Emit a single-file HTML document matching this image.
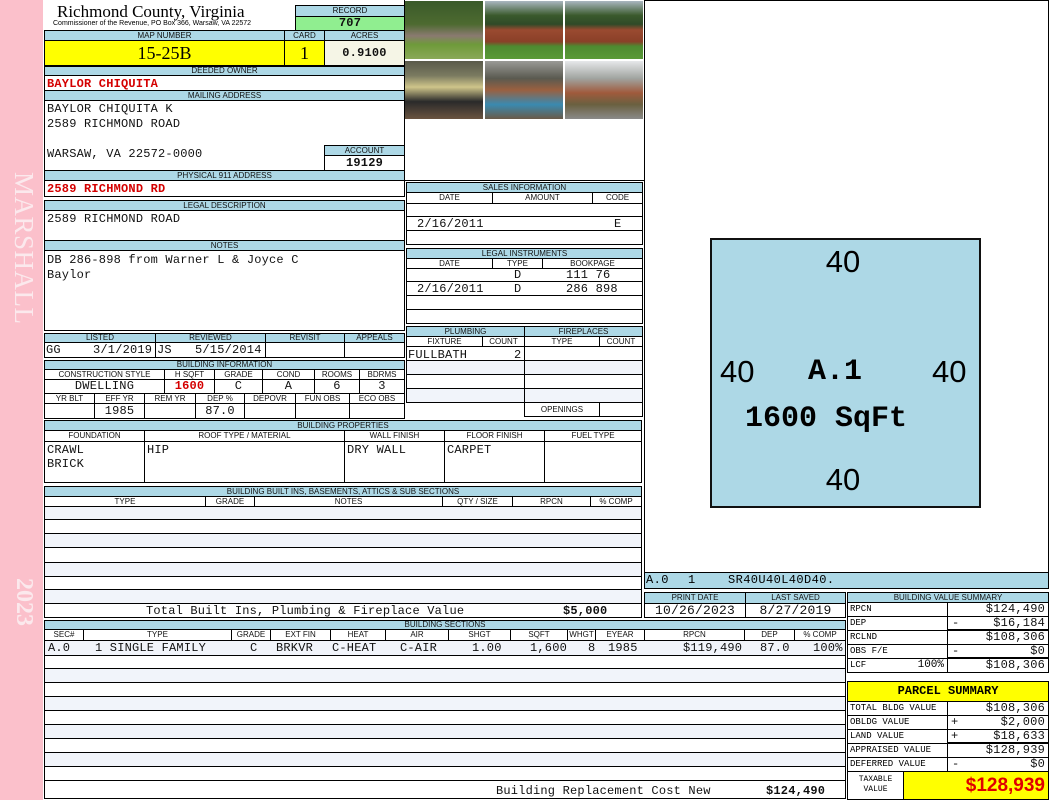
<!DOCTYPE html>
<html><head><meta charset="utf-8"><style>
*{margin:0;padding:0;box-sizing:border-box}
body{width:1050px;height:800px;position:relative;background:#fff;overflow:hidden;font-family:"Liberation Sans",sans-serif}
div,span.a{position:absolute}
.c{border:1px solid #000;background:#fff;overflow:hidden;white-space:nowrap}
.h{border:1px solid #000;background:#add8e6;font:8px/9px "Liberation Sans",sans-serif;text-align:center;color:#111;overflow:hidden;white-space:nowrap}
.v{font:12px/13px "Liberation Mono",monospace;letter-spacing:0.2px;color:#111;padding-left:2px}
.vc{text-align:center;padding-left:0}
.vr{text-align:right;padding-right:3px}
.red{color:#d40000;font-weight:bold}
.alt{background:#f1f4fa}
.s{font:9px/12px "Liberation Mono",monospace;padding-left:2px}
span.a{top:0}
</style></head><body>
<div style="left:0;top:0;width:43px;height:800px;background:#fbc0cb"></div>
<div style="left:6px;top:172px;width:36px;height:170px;writing-mode:vertical-rl;font:27px/36px 'Liberation Serif',serif;color:#fbe9ed;letter-spacing:0.5px">MARSHALL</div>
<div style="left:6px;top:578px;width:36px;height:60px;writing-mode:vertical-rl;font:bold 24px/36px 'Liberation Serif',serif;color:#fbe9ed">2023</div>

<div style="left:57px;top:2px;font:17px/19px 'Liberation Serif',serif">Richmond County, Virginia</div>
<div style="left:53px;top:19px;font:7px/9px 'Liberation Sans',sans-serif">Commissioner of the Revenue, PO Box 366, Warsaw, VA 22572</div>
<div class="h" style="left:295px;top:5px;width:110px;height:12px;line-height:10px">RECORD</div>
<div class="c v vc" style="left:295px;top:16px;width:110px;height:15px;background:#90ee90;font-weight:bold">707</div>

<div class="h" style="left:44px;top:30px;width:241px;height:11px">MAP NUMBER</div>
<div class="h" style="left:284px;top:30px;width:41px;height:11px">CARD</div>
<div class="h" style="left:324px;top:30px;width:81px;height:11px">ACRES</div>
<div class="c" style="left:44px;top:40px;width:241px;height:26px;background:#ffff00;font:18px/24px 'Liberation Serif',serif;text-align:center">15-25B</div>
<div class="c" style="left:284px;top:40px;width:41px;height:26px;background:#ffff00;font:18px/24px 'Liberation Serif',serif;text-align:center">1</div>
<div class="c v vc" style="left:324px;top:40px;width:81px;height:26px;background:#f5f5e6;font-weight:bold;line-height:24px">0.9100</div>

<div class="h" style="left:44px;top:66px;width:361px;height:10px;line-height:8px">DEEDED OWNER</div>
<div class="c v red" style="left:44px;top:75px;width:361px;height:16px;line-height:16px">BAYLOR CHIQUITA</div>
<div class="h" style="left:44px;top:90px;width:361px;height:11px">MAILING ADDRESS</div>
<div class="c v" style="left:44px;top:100px;width:361px;height:71px;line-height:15px;white-space:pre;padding-top:1px">BAYLOR CHIQUITA K
2589 RICHMOND ROAD

WARSAW, VA 22572-0000</div>
<div class="h" style="left:324px;top:145px;width:81px;height:11px">ACCOUNT</div>
<div class="c v vc" style="left:324px;top:155px;width:81px;height:16px;font-weight:bold;line-height:15px">19129</div>
<div class="h" style="left:44px;top:170px;width:361px;height:11px">PHYSICAL 911 ADDRESS</div>
<div class="c v red" style="left:44px;top:180px;width:361px;height:17px;line-height:16px">2589 RICHMOND RD</div>

<div class="h" style="left:44px;top:200px;width:361px;height:11px">LEGAL DESCRIPTION</div>
<div class="c v" style="left:44px;top:210px;width:361px;height:31px;padding-top:2px">2589 RICHMOND ROAD</div>
<div class="h" style="left:44px;top:240px;width:361px;height:11px">NOTES</div>
<div class="c v" style="left:44px;top:250px;width:361px;height:81px;line-height:15px;white-space:pre;padding-top:2px">DB 286-898 from Warner L &amp; Joyce C
Baylor</div>

<div class="h" style="left:44px;top:333px;width:112px;height:10px;line-height:8px">LISTED</div>
<div class="h" style="left:155px;top:333px;width:111px;height:10px;line-height:8px">REVIEWED</div>
<div class="h" style="left:265px;top:333px;width:80px;height:10px;line-height:8px">REVISIT</div>
<div class="h" style="left:344px;top:333px;width:61px;height:10px;line-height:8px">APPEALS</div>
<div class="c v" style="left:44px;top:342px;width:112px;height:16px;line-height:15px"><span class="a" style="left:1px">GG</span><span class="a" style="left:48px">3/1/2019</span></div>
<div class="c v" style="left:155px;top:342px;width:111px;height:16px;line-height:15px"><span class="a" style="left:1px">JS</span><span class="a" style="left:39px">5/15/2014</span></div>
<div class="c" style="left:265px;top:342px;width:80px;height:16px"></div>
<div class="c" style="left:344px;top:342px;width:61px;height:16px"></div>

<div class="h" style="left:44px;top:360px;width:361px;height:10px;line-height:8px">BUILDING INFORMATION</div>
<div class="h" style="left:44px;top:369px;width:121px;height:11px;background:#fff">CONSTRUCTION STYLE</div>
<div class="h" style="left:164px;top:369px;width:51px;height:11px;background:#fff">H SQFT</div>
<div class="h" style="left:214px;top:369px;width:49px;height:11px;background:#fff">GRADE</div>
<div class="h" style="left:262px;top:369px;width:53px;height:11px;background:#fff">COND</div>
<div class="h" style="left:314px;top:369px;width:46px;height:11px;background:#fff">ROOMS</div>
<div class="h" style="left:359px;top:369px;width:46px;height:11px;background:#fff">BDRMS</div>
<div class="c v vc" style="left:44px;top:379px;width:121px;height:15px">DWELLING</div>
<div class="c v vc red" style="left:164px;top:379px;width:51px;height:15px">1600</div>
<div class="c v vc" style="left:214px;top:379px;width:49px;height:15px">C</div>
<div class="c v vc" style="left:262px;top:379px;width:53px;height:15px">A</div>
<div class="c v vc" style="left:314px;top:379px;width:46px;height:15px">6</div>
<div class="c v vc" style="left:359px;top:379px;width:46px;height:15px">3</div>
<div class="h" style="left:44px;top:393px;width:51px;height:11px;background:#fff">YR BLT</div>
<div class="h" style="left:94px;top:393px;width:51px;height:11px;background:#fff">EFF YR</div>
<div class="h" style="left:144px;top:393px;width:52px;height:11px;background:#fff">REM YR</div>
<div class="h" style="left:195px;top:393px;width:50px;height:11px;background:#fff">DEP %</div>
<div class="h" style="left:244px;top:393px;width:52px;height:11px;background:#fff">DEPOVR</div>
<div class="h" style="left:295px;top:393px;width:55px;height:11px;background:#fff">FUN OBS</div>
<div class="h" style="left:349px;top:393px;width:56px;height:11px;background:#fff">ECO OBS</div>
<div class="c" style="left:44px;top:403px;width:51px;height:16px"></div>
<div class="c v vc" style="left:94px;top:403px;width:51px;height:16px;line-height:15px">1985</div>
<div class="c" style="left:144px;top:403px;width:52px;height:16px"></div>
<div class="c v vc" style="left:195px;top:403px;width:50px;height:16px;line-height:15px">87.0</div>
<div class="c" style="left:244px;top:403px;width:52px;height:16px"></div>
<div class="c" style="left:295px;top:403px;width:55px;height:16px"></div>
<div class="c" style="left:349px;top:403px;width:56px;height:16px"></div>

<!-- photos -->
<div style="left:404px;top:0;width:241px;height:181px;border:1px solid #000;border-top:none"></div>
<div style="left:405px;top:1px;width:78px;height:58px;background:linear-gradient(#3a5a2a 0,#4d6a30 40%,#8a7a70 60%,#6e9a3a 75%,#8aa858 100%)"></div>
<div style="left:485px;top:1px;width:78px;height:58px;background:linear-gradient(#aab6c0 0,#3a5a2c 25%,#2f4a28 40%,#9a4a30 50%,#8a4028 70%,#4e8a30 78%,#5a9a38 100%)"></div>
<div style="left:565px;top:1px;width:78px;height:58px;background:linear-gradient(#aab6c0 0,#3a5a2c 25%,#2f4a28 40%,#9a4a30 50%,#8a4028 70%,#4e8a30 78%,#5a9a38 100%)"></div>
<div style="left:405px;top:61px;width:78px;height:58px;background:linear-gradient(#5a5a4a 0,#7a7a60 25%,#cfc58a 45%,#2a2a2a 70%,#6a5440 100%)"></div>
<div style="left:485px;top:61px;width:78px;height:58px;background:linear-gradient(#9a9a96 0,#5a5a50 30%,#9a6040 50%,#3a8ab0 75%,#6a5a48 100%)"></div>
<div style="left:565px;top:61px;width:78px;height:58px;background:linear-gradient(#e6e8ea 0,#a0a4a0 30%,#a05a3c 55%,#6a6040 75%,#8a8a88 100%)"></div>

<!-- sales -->
<div class="h" style="left:406px;top:182px;width:237px;height:11px">SALES INFORMATION</div>
<div class="h" style="left:406px;top:192px;width:87px;height:12px;background:#fff">DATE</div>
<div class="h" style="left:492px;top:192px;width:101px;height:12px;background:#fff">AMOUNT</div>
<div class="h" style="left:592px;top:192px;width:51px;height:12px;background:#fff">CODE</div>
<div class="c" style="left:406px;top:203px;width:237px;height:14px"></div>
<div class="c v" style="left:406px;top:216px;width:237px;height:15px;line-height:15px"><span class="a" style="left:10px">2/16/2011</span><span class="a" style="left:207px">E</span></div>
<div class="c" style="left:406px;top:230px;width:237px;height:15px"></div>
<div class="h" style="left:406px;top:248px;width:237px;height:11px">LEGAL INSTRUMENTS</div>
<div class="h" style="left:406px;top:258px;width:87px;height:11px;background:#fff">DATE</div>
<div class="h" style="left:492px;top:258px;width:51px;height:11px;background:#fff">TYPE</div>
<div class="h" style="left:542px;top:258px;width:101px;height:11px;background:#fff">BOOKPAGE</div>
<div class="c v" style="left:406px;top:268px;width:237px;height:14px"><span class="a" style="left:107px">D</span><span class="a" style="left:159px">111 76</span></div>
<div class="c v" style="left:406px;top:281px;width:237px;height:15px;line-height:15px"><span class="a" style="left:10px">2/16/2011</span><span class="a" style="left:107px">D</span><span class="a" style="left:159px">286 898</span></div>
<div class="c" style="left:406px;top:295px;width:237px;height:15px"></div>
<div class="c" style="left:406px;top:309px;width:237px;height:15px"></div>

<!-- plumbing -->
<div class="h" style="left:406px;top:326px;width:119px;height:11px">PLUMBING</div>
<div class="h" style="left:524px;top:326px;width:119px;height:11px">FIREPLACES</div>
<div class="h" style="left:406px;top:336px;width:77px;height:11px;background:#fff">FIXTURE</div>
<div class="h" style="left:482px;top:336px;width:43px;height:11px;background:#fff">COUNT</div>
<div class="h" style="left:524px;top:336px;width:76px;height:11px;background:#fff">TYPE</div>
<div class="h" style="left:599px;top:336px;width:44px;height:11px;background:#fff">COUNT</div>
<div class="c v" style="left:406px;top:346px;width:119px;height:15px;line-height:16px"><span class="a" style="left:1px">FULLBATH</span><span class="a" style="left:107px">2</span></div>
<div class="c alt" style="left:406px;top:360px;width:119px;height:15px"></div>
<div class="c" style="left:406px;top:374px;width:119px;height:15px"></div>
<div class="c alt" style="left:406px;top:388px;width:119px;height:15px"></div>
<div class="c" style="left:524px;top:346px;width:119px;height:15px"></div>
<div class="c alt" style="left:524px;top:360px;width:119px;height:15px"></div>
<div class="c" style="left:524px;top:374px;width:119px;height:15px"></div>
<div class="c alt" style="left:524px;top:388px;width:119px;height:15px"></div>
<div class="h" style="left:524px;top:402px;width:76px;height:15px;background:#fff;line-height:13px">OPENINGS</div>
<div class="c" style="left:599px;top:402px;width:44px;height:15px"></div>

<!-- building properties -->
<div class="h" style="left:44px;top:420px;width:598px;height:11px">BUILDING PROPERTIES</div>
<div class="h" style="left:44px;top:430px;width:101px;height:12px;background:#fff">FOUNDATION</div>
<div class="h" style="left:144px;top:430px;width:201px;height:12px;background:#fff">ROOF TYPE / MATERIAL</div>
<div class="h" style="left:344px;top:430px;width:101px;height:12px;background:#fff">WALL FINISH</div>
<div class="h" style="left:444px;top:430px;width:101px;height:12px;background:#fff">FLOOR FINISH</div>
<div class="h" style="left:544px;top:430px;width:98px;height:12px;background:#fff">FUEL TYPE</div>
<div class="c v" style="left:44px;top:441px;width:101px;height:42px;line-height:14px;white-space:pre;padding-top:1px">CRAWL
BRICK</div>
<div class="c v" style="left:144px;top:441px;width:201px;height:42px;line-height:14px;padding-top:1px">HIP</div>
<div class="c v" style="left:344px;top:441px;width:101px;height:42px;line-height:14px;padding-top:1px">DRY WALL</div>
<div class="c v" style="left:444px;top:441px;width:101px;height:42px;line-height:14px;padding-top:1px">CARPET</div>
<div class="c" style="left:544px;top:441px;width:98px;height:42px"></div>

<!-- built ins -->
<div class="h" style="left:44px;top:486px;width:598px;height:11px">BUILDING BUILT INS, BASEMENTS, ATTICS &amp; SUB SECTIONS</div>
<div class="h" style="left:44px;top:496px;width:162px;height:11px;background:#fff">TYPE</div>
<div class="h" style="left:205px;top:496px;width:50px;height:11px;background:#fff">GRADE</div>
<div class="h" style="left:254px;top:496px;width:189px;height:11px;background:#fff">NOTES</div>
<div class="h" style="left:442px;top:496px;width:71px;height:11px;background:#fff">QTY / SIZE</div>
<div class="h" style="left:512px;top:496px;width:79px;height:11px;background:#fff">RPCN</div>
<div class="h" style="left:590px;top:496px;width:52px;height:11px;background:#fff">% COMP</div>
<div class="c alt" style="left:44px;top:506px;width:598px;height:14px"></div>
<div class="c" style="left:44px;top:519px;width:598px;height:15px"></div>
<div class="c alt" style="left:44px;top:533px;width:598px;height:15px"></div>
<div class="c" style="left:44px;top:547px;width:598px;height:16px"></div>
<div class="c alt" style="left:44px;top:562px;width:598px;height:15px"></div>
<div class="c" style="left:44px;top:576px;width:598px;height:14px"></div>
<div class="c alt" style="left:44px;top:589px;width:598px;height:15px"></div>
<div class="c v" style="left:44px;top:603px;width:598px;height:15px;line-height:15px"><span class="a" style="left:101px">Total Built Ins, Plumbing &amp; Fireplace Value</span><span class="a" style="left:518px;font-weight:bold">$5,000</span></div>

<!-- building sections -->
<div class="h" style="left:44px;top:620px;width:802px;height:10px;line-height:8px">BUILDING SECTIONS</div>
<div class="h" style="left:44px;top:629px;width:40px;height:12px;background:#fff">SEC#</div>
<div class="h" style="left:83px;top:629px;width:149px;height:12px;background:#fff">TYPE</div>
<div class="h" style="left:231px;top:629px;width:40px;height:12px;background:#fff">GRADE</div>
<div class="h" style="left:270px;top:629px;width:61px;height:12px;background:#fff">EXT FIN</div>
<div class="h" style="left:330px;top:629px;width:56px;height:12px;background:#fff">HEAT</div>
<div class="h" style="left:385px;top:629px;width:64px;height:12px;background:#fff">AIR</div>
<div class="h" style="left:448px;top:629px;width:63px;height:12px;background:#fff">SHGT</div>
<div class="h" style="left:510px;top:629px;width:58px;height:12px;background:#fff">SQFT</div>
<div class="h" style="left:567px;top:629px;width:29px;height:12px;background:#fff">WHGT</div>
<div class="h" style="left:595px;top:629px;width:50px;height:12px;background:#fff">EYEAR</div>
<div class="h" style="left:644px;top:629px;width:101px;height:12px;background:#fff">RPCN</div>
<div class="h" style="left:744px;top:629px;width:51px;height:12px;background:#fff">DEP</div>
<div class="h" style="left:794px;top:629px;width:52px;height:12px;background:#fff">% COMP</div>
<div class="c v alt" style="left:44px;top:640px;width:802px;height:16px;line-height:15px">
<span class="a" style="left:3px">A.0</span><span class="a" style="left:50px">1 SINGLE FAMILY</span><span class="a" style="left:205px">C</span><span class="a" style="left:231px">BRKVR</span><span class="a" style="left:287px">C-HEAT</span><span class="a" style="left:355px">C-AIR</span><span class="a" style="left:427px">1.00</span><span class="a" style="left:485px">1,600</span><span class="a" style="left:543px">8</span><span class="a" style="left:563px">1985</span><span class="a" style="left:638px">$119,490</span><span class="a" style="left:715px">87.0</span><span class="a" style="left:768px">100%</span></div>
<div class="c" style="left:44px;top:655px;width:802px;height:14px"></div>
<div class="c alt" style="left:44px;top:668px;width:802px;height:15px"></div>
<div class="c" style="left:44px;top:682px;width:802px;height:15px"></div>
<div class="c alt" style="left:44px;top:696px;width:802px;height:15px"></div>
<div class="c" style="left:44px;top:710px;width:802px;height:15px"></div>
<div class="c alt" style="left:44px;top:724px;width:802px;height:15px"></div>
<div class="c" style="left:44px;top:738px;width:802px;height:15px"></div>
<div class="c alt" style="left:44px;top:752px;width:802px;height:15px"></div>
<div class="c" style="left:44px;top:766px;width:802px;height:15px"></div>
<div class="c v" style="left:44px;top:780px;width:802px;height:19px;line-height:20px"><span class="a" style="left:451px">Building Replacement Cost New</span><span class="a" style="left:721px;font-weight:bold">$124,490</span></div>

<!-- sketch -->
<div style="left:644px;top:0;width:405px;height:573px;border:1px solid #000;background:#fff"></div>
<div style="left:710px;top:238px;width:271px;height:270px;border:2px solid #111;background:#add8e6"></div>
<div style="left:810px;top:245px;width:66px;font:31px/34px 'Liberation Sans',sans-serif;text-align:center">40</div>
<div style="left:810px;top:463px;width:66px;font:31px/34px 'Liberation Sans',sans-serif;text-align:center">40</div>
<div style="left:720px;top:355px;width:44px;font:31px/34px 'Liberation Sans',sans-serif">40</div>
<div style="left:932px;top:355px;width:44px;font:31px/34px 'Liberation Sans',sans-serif">40</div>
<div style="left:808px;top:355px;width:80px;font:bold 30px/34px 'Liberation Mono',monospace">A.1</div>
<div style="left:745px;top:402px;width:210px;font:bold 30px/34px 'Liberation Mono',monospace">1600 SqFt</div>
<div style="left:644px;top:572px;width:405px;height:17px;background:#add8e6;border:1px solid #000;font:12px/15px 'Liberation Mono',monospace;letter-spacing:0.4px"><span class="a" style="left:1px">A.0</span><span class="a" style="left:43px">1</span><span class="a" style="left:83px">SR40U40L40D40.</span></div>

<div class="h" style="left:644px;top:592px;width:102px;height:12px;line-height:10px">PRINT DATE</div>
<div class="h" style="left:745px;top:592px;width:101px;height:12px;line-height:10px">LAST SAVED</div>
<div class="c v vc" style="left:644px;top:603px;width:102px;height:15px;font-size:13px">10/26/2023</div>
<div class="c v vc" style="left:745px;top:603px;width:101px;height:15px;font-size:13px">8/27/2019</div>

<!-- value summary -->
<div class="h" style="left:847px;top:592px;width:202px;height:11px">BUILDING VALUE SUMMARY</div>
<div class="c s" style="left:847px;top:602px;width:101px;height:15px">RPCN</div>
<div class="c v vr" style="left:947px;top:602px;width:102px;height:15px">$124,490</div>
<div class="c s" style="left:847px;top:616px;width:101px;height:15px">DEP</div>
<div class="c v vr" style="left:947px;top:616px;width:102px;height:15px;border-bottom:2px solid #000"><span class="a" style="left:4px">-</span>$16,184</div>
<div class="c s" style="left:847px;top:630px;width:101px;height:15px">RCLND</div>
<div class="c v vr" style="left:947px;top:630px;width:102px;height:15px">$108,306</div>
<div class="c s" style="left:847px;top:644px;width:101px;height:15px">OBS F/E</div>
<div class="c v vr" style="left:947px;top:644px;width:102px;height:15px;border-bottom:2px solid #000"><span class="a" style="left:4px">-</span>$0</div>
<div class="c s" style="left:847px;top:658px;width:101px;height:15px">LCF<span class="a" style="right:3px;left:auto;font-size:11px">100%</span></div>
<div class="c v vr" style="left:947px;top:658px;width:102px;height:15px">$108,306</div>

<div class="c" style="left:847px;top:681px;width:202px;height:21px;background:#ffff00;font:bold 12px/19px 'Liberation Mono',monospace;text-align:center">PARCEL  SUMMARY</div>
<div class="c s" style="left:847px;top:701px;width:101px;height:15px">TOTAL BLDG VALUE</div>
<div class="c v vr" style="left:947px;top:701px;width:102px;height:15px">$108,306</div>
<div class="c s" style="left:847px;top:715px;width:101px;height:15px">OBLDG VALUE</div>
<div class="c v vr" style="left:947px;top:715px;width:102px;height:15px"><span class="a" style="left:3px">+</span>$2,000</div>
<div class="c s" style="left:847px;top:729px;width:101px;height:15px">LAND VALUE</div>
<div class="c v vr" style="left:947px;top:729px;width:102px;height:15px;border-bottom:2px solid #000"><span class="a" style="left:3px">+</span>$18,633</div>
<div class="c s" style="left:847px;top:743px;width:101px;height:15px">APPRAISED VALUE</div>
<div class="c v vr" style="left:947px;top:743px;width:102px;height:15px">$128,939</div>
<div class="c s" style="left:847px;top:757px;width:101px;height:15px">DEFERRED VALUE</div>
<div class="c v vr" style="left:947px;top:757px;width:102px;height:15px"><span class="a" style="left:4px">-</span>$0</div>
<div class="c" style="left:847px;top:771px;width:57px;height:29px;font:8px/10px 'Liberation Mono',monospace;text-align:center;padding-top:3px;white-space:pre">TAXABLE
VALUE</div>
<div class="c" style="left:903px;top:771px;width:146px;height:29px;background:#ffff00;color:#e00000;font:bold 19px/27px 'Liberation Sans',sans-serif;text-align:right;padding-right:3px">$128,939</div>
</body></html>
